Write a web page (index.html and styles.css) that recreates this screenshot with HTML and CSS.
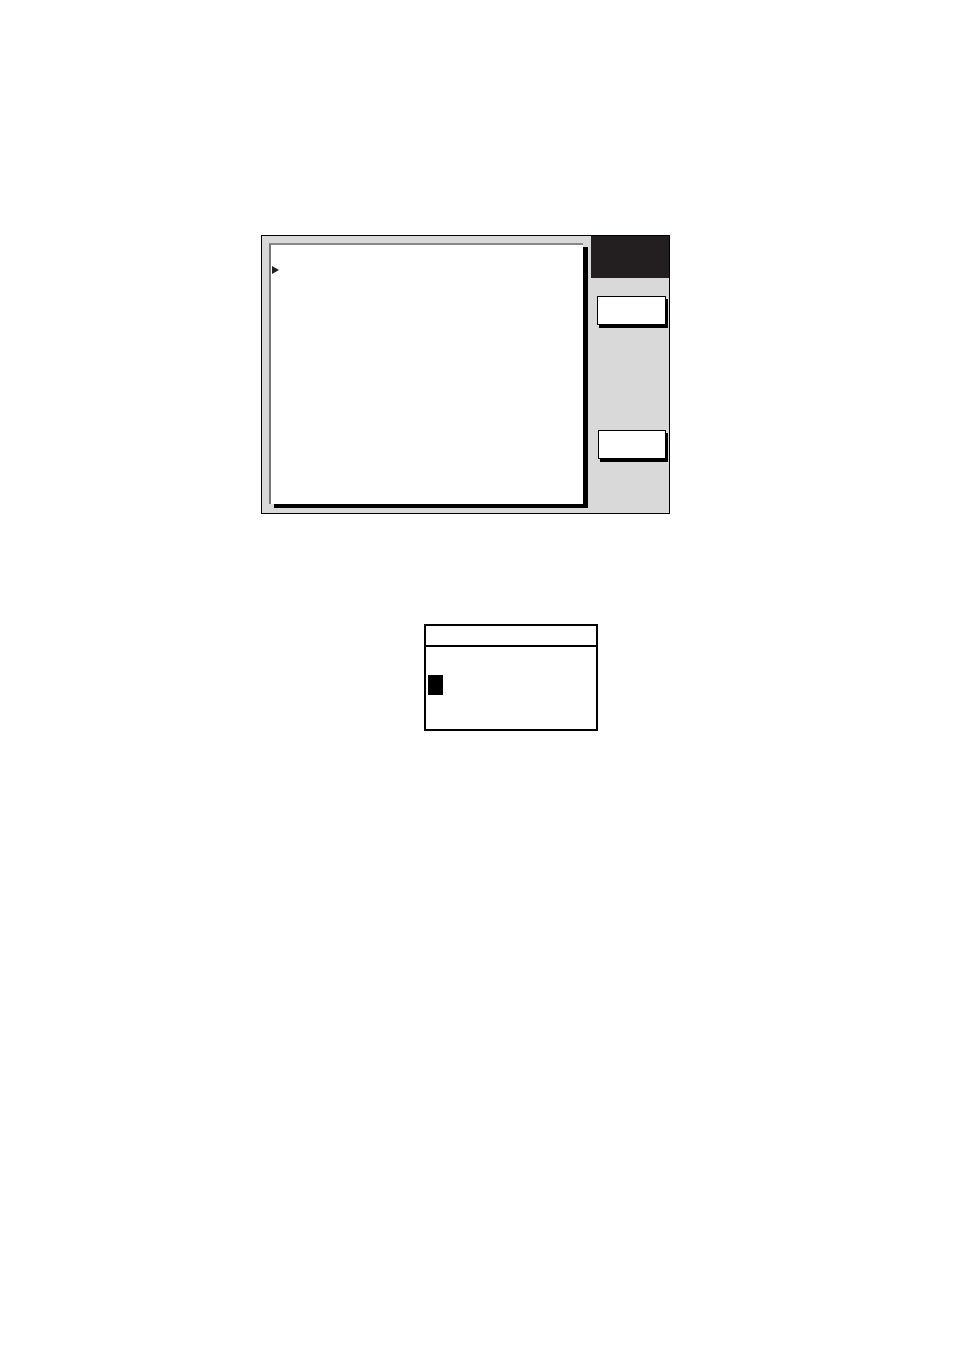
FILE: index.html
```html
<!DOCTYPE html>
<html>
<head>
<meta charset="utf-8">
<link rel="stylesheet" href="styles.css">
</head>
<body>
<div class="page">
  <div class="screen">
    <div class="main">
      <div class="panel">
        <span class="cursor"></span>
      </div>
    </div>
    <div class="side">
      <div class="side-head"></div>
      <div class="key key-1"></div>
      <div class="key key-2"></div>
    </div>
  </div>
  <div class="dialog">
    <div class="dialog-head"></div>
    <div class="dialog-body">
      <span class="block"></span>
    </div>
  </div>
</div>
</body>
</html>
```
FILE: styles.css
```css
html, body {
  margin: 0;
  padding: 0;
  background: #fff;
  font-family: "Liberation Sans", Arial, sans-serif;
}
.page {
  width: 954px;
  height: 1351px;
  padding-top: 235px;
  box-sizing: border-box;
  display: flex;
  flex-direction: column;
}
.screen {
  margin-left: 261px;
  width: 409px;
  height: 279px;
  box-sizing: border-box;
  border: 1px solid #000;
  background: #d9d9d9;
  display: flex;
}
.main {
  width: 329px;
  padding: 7px 0 0 7px;
  box-sizing: border-box;
}
.panel {
  width: 314px;
  height: 261px;
  box-sizing: border-box;
  background: #fff;
  border-left: 2px solid #777;
  border-top: 2px solid #888;
  box-shadow: 5px 4px 0 #000;
  padding: 21px 0 0 1px;
}
.cursor {
  display: block;
  width: 0;
  height: 0;
  border-top: 4px solid transparent;
  border-bottom: 4px solid transparent;
  border-left: 7px solid #231f20;
}
.side {
  width: 78px;
  display: flex;
  flex-direction: column;
}
.side-head {
  height: 42px;
  background: #231f20;
}
.key {
  height: 29px;
  width: 69px;
  box-sizing: border-box;
  background: #fff;
  border: 1px solid #000;
  box-shadow: 2px 3px 0 #000;
}
.key-1 {
  margin: 18px 0 0 6px;
}
.key-2 {
  margin: 105px 0 0 7px;
  width: 68px;
}
.dialog {
  margin: 110px 0 0 424px;
  width: 174px;
  height: 107px;
  box-sizing: border-box;
  border: 2px solid #000;
  background: #fff;
}
.dialog-head {
  height: 19px;
  border-bottom: 2px solid #000;
}
.dialog-body {
  padding: 28px 0 0 2px;
}
.block {
  display: block;
  width: 15px;
  height: 20px;
  background: #000;
}
```
